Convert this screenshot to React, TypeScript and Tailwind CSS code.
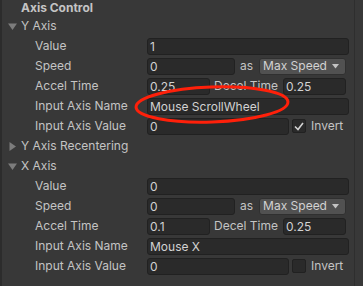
import React from "react";

const font = { fontFamily: "Inter, 'Noto Sans', sans-serif" };

const Caret = ({ open }: { open: boolean }) => (
  <svg width="9" height="9" viewBox="0 0 9 9" className="shrink-0">
    {open ? <path d="M0 1.5 L9 1.5 L4.5 8 Z" fill="#7c7c7c" /> : <path d="M1.5 0 L8 4.5 L1.5 9 Z" fill="#7c7c7c" />}
  </svg>
);

const Field = ({ value, w }: { value: string; w: string }) => (
  <div className={`${w} h-[17px] shrink-0 whitespace-nowrap rounded-[3px] border border-[#212121] bg-[#2a2a2a] pl-[2px] text-[12px] leading-[15px] text-[#d2d2d2]`}>
    {value}
  </div>
);

const Row = ({ label, children }: { label: string; children: React.ReactNode }) => (
  <div className="flex h-[20px] items-center">
    <div className="w-[145px] shrink-0 whitespace-nowrap pl-[33px] text-[12px] text-[#c4c4c4]">{label}</div>
    {children}
  </div>
);

const Fold = ({ label, open }: { label: string; open: boolean }) => (
  <div className="flex h-[20px] items-center whitespace-nowrap pl-[6px] text-[12px] text-[#c4c4c4]">
    <Caret open={open} />
    <span className="ml-[4px]">{label}</span>
  </div>
);

const Dropdown = () => (
  <div className="flex h-[17px] w-[87px] shrink-0 items-center justify-between whitespace-nowrap rounded-[3px] border border-[#303030] bg-[#515151] pl-[3px] pr-[6px] text-[12px] text-[#d2d2d2]">
    <span>Max Speed</span>
    <svg width="7" height="5" viewBox="0 0 7 5">
      <path d="M0 0 L7 0 L3.5 4.5 Z" fill="#c4c4c4" />
    </svg>
  </div>
);

const Checkbox = ({ checked }: { checked: boolean }) => (
  <div className="ml-[3px] flex h-[14px] w-[14px] shrink-0 items-center justify-center rounded-[2px] border border-[#212121] bg-[#2a2a2a]">
    {checked && (
      <svg width="10" height="9" viewBox="0 0 10 9">
        <path d="M1 4.5 L4 7.5 L9 1" stroke="#d2d2d2" strokeWidth="1.6" fill="none" />
      </svg>
    )}
  </div>
);

const AxisBlock = ({ accel, name, inverted }: { accel: string; name: string; inverted: boolean }) => (
  <>
    <Row label="Value">
      <Field value={inverted ? "1" : "0"} w="w-[202px]" />
    </Row>
    <Row label="Speed">
      <Field value="0" w="w-[88px]" />
      <span className="ml-[5px] mr-[6px] text-[12px] text-[#c4c4c4]">as</span>
      <Dropdown />
    </Row>
    <Row label="Accel Time">
      <Field value={accel} w="w-[63px]" />
      <span className="ml-[4px] w-[69px] whitespace-nowrap text-[12px] text-[#c4c4c4]">Decel Time</span>
      <Field value="0.25" w="w-[63px]" />
    </Row>
    <Row label="Input Axis Name">
      <Field value={name} w="w-[202px]" />
    </Row>
    <Row label="Input Axis Value">
      <Field value="0" w="w-[142px]" />
      <Checkbox checked={inverted} />
      <span className="ml-[5px] text-[12px] text-[#c4c4c4]">Invert</span>
    </Row>
  </>
);

export default function App() {
  return (
    <div className="relative flex h-[286px] w-[363px] overflow-hidden bg-[#383838]" style={font}>
      <div className="w-[2px] shrink-0 bg-[#2c2c2c]" />
      <div className="flex w-[352px] shrink-0 flex-col">
        <div className="flex h-[16px] items-center pl-[19px] text-[12px] font-bold text-[#c4c4c4]">Axis Control</div>
        <Fold label="Y Axis" open />
        <AxisBlock accel="0.25" name="Mouse ScrollWheel" inverted />
        <Fold label="Y Axis Recentering" open={false} />
        <Fold label="X Axis" open />
        <AxisBlock accel="0.1" name="Mouse X" inverted={false} />
      </div>
      <div className="w-[1px] shrink-0 bg-[#2e2e2e]" />
      <svg className="pointer-events-none absolute left-0 top-0" width="363" height="286">
        <ellipse cx="212" cy="104.5" rx="76" ry="17.5" transform="rotate(-2 212 104.5)" fill="none" stroke="#ff200a" strokeWidth="3" />
      </svg>
    </div>
  );
}
